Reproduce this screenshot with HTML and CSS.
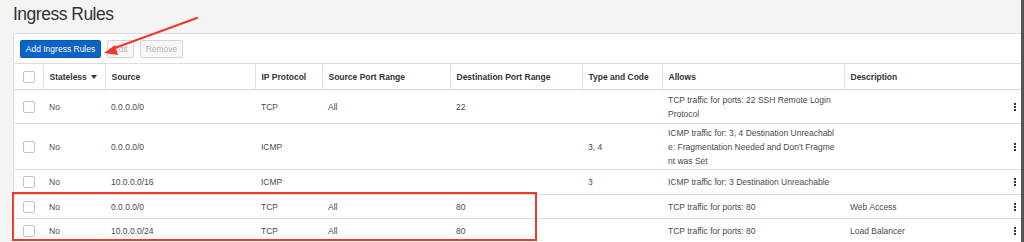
FILE: index.html
```html
<!DOCTYPE html>
<html lang="en">

<head>
    <meta charset="utf-8">
    <meta name="viewport" content="width=device-width, initial-scale=1.0">
    <title>Ingress Rules</title>
    <link rel="stylesheet" href="styles.css">
</head>

<body>
    <div class="page">
        <h1>Ingress Rules</h1>

        <section class="panel">
            <div class="toolbar">
                <button class="btn primary">Add Ingress Rules</button>
                <button class="btn" disabled>Edit</button>
                <button class="btn" disabled>Remove</button>
            </div>

            <table class="rules">
                <colgroup>
                    <col class="c_check">
                    <col class="c_state">
                    <col class="c_source">
                    <col class="c_proto">
                    <col class="c_sport">
                    <col class="c_dport">
                    <col class="c_type">
                    <col class="c_allows">
                    <col class="c_desc">
                    <col class="c_menu">
                </colgroup>
                <thead>
                    <tr>
                        <th><span class="box"></span></th>
                        <th>Stateless <span class="caret"></span></th>
                        <th>Source</th>
                        <th>IP Protocol</th>
                        <th>Source Port Range</th>
                        <th>Destination Port Range</th>
                        <th>Type and Code</th>
                        <th>Allows</th>
                        <th class="last">Description</th>
                        <th></th>
                    </tr>
                </thead>
                <tbody>
                    <tr class="r1">
                        <td><span class="box"></span></td>
                        <td>No</td>
                        <td>0.0.0.0/0</td>
                        <td>TCP</td>
                        <td>All</td>
                        <td>22</td>
                        <td></td>
                        <td>TCP traffic for ports: 22 SSH Remote Login<br>Protocol</td>
                        <td></td>
                        <td><span class="kebab"><i></i><i></i><i></i></span></td>
                    </tr>
                    <tr class="r2">
                        <td><span class="box"></span></td>
                        <td>No</td>
                        <td>0.0.0.0/0</td>
                        <td>ICMP</td>
                        <td></td>
                        <td></td>
                        <td>3, 4</td>
                        <td>ICMP traffic for: 3, 4 Destination Unreachabl<br>e: Fragmentation Needed and Don't Fragme<br>nt was Set</td>
                        <td></td>
                        <td><span class="kebab"><i></i><i></i><i></i></span></td>
                    </tr>
                    <tr class="r3">
                        <td><span class="box"></span></td>
                        <td>No</td>
                        <td>10.0.0.0/16</td>
                        <td>ICMP</td>
                        <td></td>
                        <td></td>
                        <td>3</td>
                        <td>ICMP traffic for: 3 Destination Unreachable</td>
                        <td></td>
                        <td><span class="kebab"><i></i><i></i><i></i></span></td>
                    </tr>
                    <tr class="r4">
                        <td><span class="box"></span></td>
                        <td>No</td>
                        <td>0.0.0.0/0</td>
                        <td>TCP</td>
                        <td>All</td>
                        <td>80</td>
                        <td></td>
                        <td>TCP traffic for ports: 80</td>
                        <td>Web Access</td>
                        <td><span class="kebab"><i></i><i></i><i></i></span></td>
                    </tr>
                    <tr class="r5">
                        <td><span class="box"></span></td>
                        <td>No</td>
                        <td>10.0.0.0/24</td>
                        <td>TCP</td>
                        <td>All</td>
                        <td>80</td>
                        <td></td>
                        <td>TCP traffic for ports: 80</td>
                        <td>Load Balancer</td>
                        <td><span class="kebab"><i></i><i></i><i></i></span></td>
                    </tr>
                </tbody>
            </table>
        </section>

        <!-- annotations drawn on top of the screenshot -->
        <svg class="arrow" width="110" height="50" viewBox="0 0 110 50">
            <line x1="97" y1="4" x2="12" y2="35" stroke="#ec3a2c" stroke-width="2.2" stroke-linecap="round"/>
            <polygon points="4,39 15,31 18,41" fill="#ec3a2c"/>
        </svg>
        <div class="highlight"></div>
    </div>
</body></html>
```

FILE: styles.css
```css
body {
    margin: 0;
    background-color: #f4f4f4;
    font-family: "Liberation Sans", Arial, sans-serif;
    color: #4a4a4a;
    overflow: hidden;
}

.page {
    position: relative;
    width: 1021px;
    height: 242px;
    border-right: 3px solid #555;
}

h1 {
    margin: 0;
    padding: 4px 0 0 13px;
    height: 33px;
    box-sizing: border-box;
    font-size: 17.5px;
    font-weight: normal;
    letter-spacing: -0.5px;
    color: #333;
}

.panel {
    margin-left: 13px;
    background-color: #ffffff;
    border-top: 1px solid #dcdcdc;
    border-left: 1px solid #dcdcdc;
    height: 208px;
    overflow: hidden;
}

.toolbar {
    display: flex;
    gap: 6px;
    height: 30px;
    box-sizing: border-box;
    padding: 6px 0 0 6px;
    border-bottom: 1px solid #dcdcdc;
}

.btn {
    height: 18px;
    padding: 0 5px;
    font-family: inherit;
    font-size: 8.5px;
    white-space: nowrap;
    border: 1px solid #d4d4d4;
    border-radius: 2px;
    background-color: #f6f6f6;
    color: #b8b8b8;
}

.btn.primary {
    width: 81px;
    padding: 0;
    background-color: #0a63c7;
    border-color: #0a58b4;
    color: #ffffff;
}

.rules {
    width: 100%;
    border-collapse: collapse;
    table-layout: fixed;
    font-size: 8.5px;
}

.c_check { width: 29px; }
.c_state { width: 62px; }
.c_source { width: 150px; }
.c_proto { width: 67px; }
.c_sport { width: 128px; }
.c_dport { width: 132px; }
.c_type { width: 80px; }
.c_allows { width: 182px; }
.c_desc { width: 155px; }
.c_menu { width: 22px; }

.rules th {
    height: 25px;
    padding: 0 6px;
    text-align: left;
    font-weight: bold;
    color: #333;
    border-right: 1px solid #e0e0e0;
    border-bottom: 1px solid #d6d6d6;
}

.rules th.last,
.rules th:last-child {
    border-right: none;
}

.rules td {
    padding: 0 6px;
    line-height: 14px;
    border-bottom: 1px solid #dedede;
    white-space: nowrap;
    vertical-align: middle;
}

.rules th:first-child,
.rules td:first-child {
    padding: 0 0 0 9px;
}

.rules td:last-child {
    padding: 0;
}

.r1 td { height: 33px; }
.r2 td { height: 45px; }
.r3 td { height: 24px; }
.r4 td { height: 23px; }
.r5 td { height: 23px; }

.box {
    display: block;
    width: 10px;
    height: 10px;
    border: 1px solid #c4c4c4;
    border-radius: 2px;
    background-color: #ffffff;
}

.caret {
    display: inline-block;
    margin-left: 2px;
    vertical-align: 1px;
    border-left: 3px solid transparent;
    border-right: 3px solid transparent;
    border-top: 4px solid #333;
}

.kebab {
    display: flex;
    flex-direction: column;
    gap: 1px;
    width: 2px;
    margin-left: 15px;
}

.kebab i {
    display: block;
    width: 2px;
    height: 2px;
    background-color: #333;
}

.arrow {
    position: absolute;
    left: 100px;
    top: 14px;
}

.highlight {
    position: absolute;
    left: 12px;
    top: 192px;
    width: 521px;
    height: 45px;
    border: 2px solid #ec3a2c;
}
```
